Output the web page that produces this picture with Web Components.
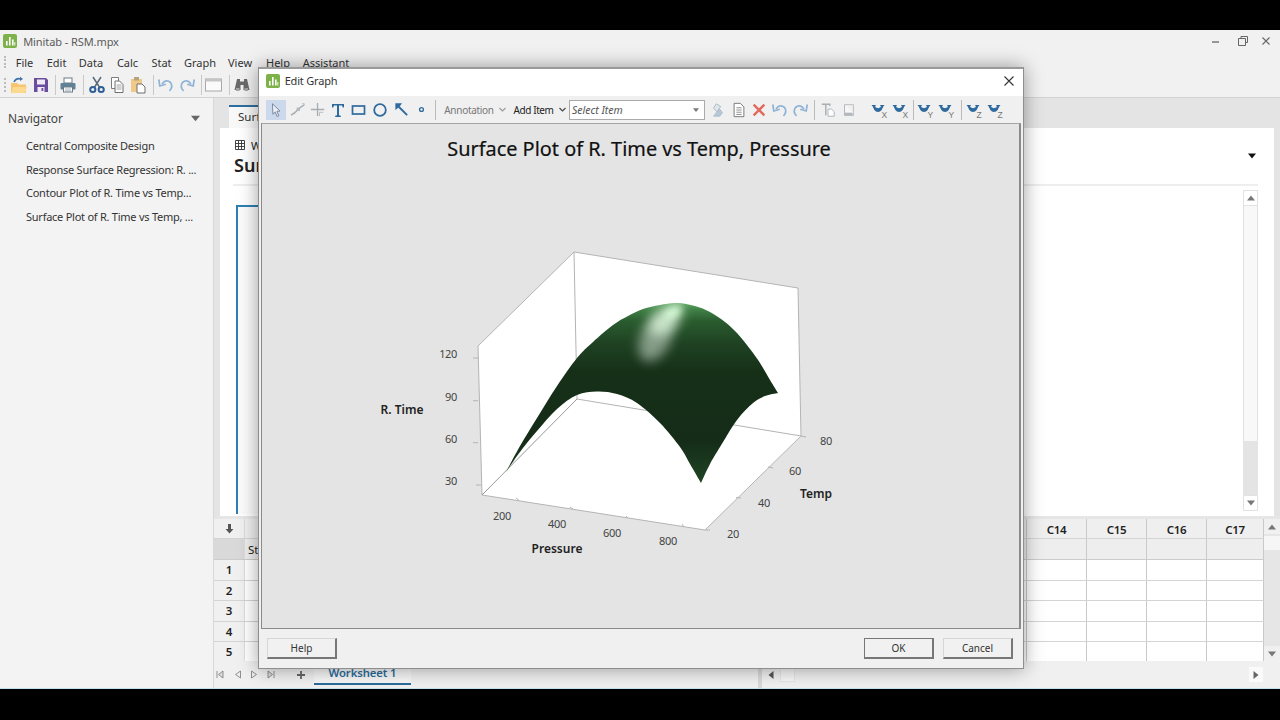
<!DOCTYPE html>
<html lang="en"><head><meta charset="utf-8"><title>Minitab - RSM.mpx</title>
<style>
html,body{margin:0;height:100%;background:#000;overflow:hidden}
body{font-family:"Noto Sans","Open Sans",sans-serif}
</style></head>
<body>
<minitab-app></minitab-app>
<script>
const FONT='"Noto Sans","Open Sans",sans-serif';
const ICONS={
 logo:`<svg viewBox="0 0 14 14" width="14" height="14"><rect width="14" height="14" rx="2" fill="#7db24a"/><rect x="3" y="7" width="1.6" height="4.5" fill="#fff"/><rect x="6" y="3" width="1.6" height="8.5" fill="#fff"/><rect x="9" y="5.5" width="1.6" height="6" fill="#fff"/><rect x="11.2" y="8" width="1.2" height="3.5" fill="#dfeccf"/></svg>`,
 open:`<svg viewBox="0 0 18 18"><path d="M1 7h6l1.500 1.500H16V17H1z" fill="#f5c56f"/><path d="M1 17l2-6h14l-2 6z" fill="#fbd98f"/><path d="M4 6 Q6 1.500 11 3" fill="none" stroke="#3f73a8" stroke-width="1.600"/><path d="M10 .8l3 2.200-3 2z" fill="#3f73a8"/></svg>`,
 save:`<svg viewBox="0 0 18 18"><path d="M2 2h12l2 2v12H2z" fill="#6a4d9c"/><rect x="5" y="3.500" width="8" height="5" fill="#efeaf6"/><rect x="5.500" y="11" width="7" height="5" fill="#efeaf6"/><rect x="9.500" y="12" width="1.800" height="3" fill="#6a4d9c"/></svg>`,
 print:`<svg viewBox="0 0 18 18"><rect x="5" y="2" width="8" height="5" fill="#fff" stroke="#6c7a86"/><rect x="1.500" y="7" width="15" height="6.500" rx="1" fill="#5f8296"/><rect x="4.500" y="11" width="9" height="5" fill="#fff" stroke="#6c7a86"/><path d="M6 13h6M6 14.800h6" stroke="#8a98a4" stroke-width=".7"/></svg>`,
 cut:`<svg viewBox="0 0 18 18"><path d="M5 1l7 11M13 1L6 12" stroke="#5b6a76" stroke-width="1.500" fill="none"/><circle cx="4.800" cy="13.500" r="2.600" fill="none" stroke="#2d5f96" stroke-width="2"/><circle cx="13.200" cy="13.500" r="2.600" fill="none" stroke="#2d5f96" stroke-width="2"/></svg>`,
 copy:`<svg viewBox="0 0 18 18"><path d="M3.500 1.500h7v11h-7z" fill="#fff" stroke="#7c7c7c"/><path d="M7 5h4.500L15 8.500v8H7z" fill="#fff" stroke="#6e6e6e"/><path d="M8.500 9h5M8.500 11h5M8.500 13h5" stroke="#8a8a8a" stroke-width=".8"/></svg>`,
 paste:`<svg viewBox="0 0 18 18"><rect x="2" y="3" width="11" height="13" fill="#eec98a"/><rect x="5" y="1" width="5" height="3.500" fill="#b6a27d"/><path d="M8 8h5l3 3v6H8z" fill="#fff" stroke="#6e6e6e"/></svg>`,
 undo:`<svg viewBox="0 0 18 18"><path d="M5 8 Q9 2.500 13.500 6.500 Q16.500 10.500 12.500 15" fill="none" stroke="#8fb3d6" stroke-width="1.700"/><path d="M1.800 3.500l1 6.500 6-1.800" fill="none" stroke="#8fb3d6" stroke-width="1.700"/></svg>`,
 redo:`<svg viewBox="0 0 18 18"><g transform="matrix(-1 0 0 1 18 0)"><path d="M5 8 Q9 2.500 13.500 6.500 Q16.500 10.500 12.500 15" fill="none" stroke="#8fb3d6" stroke-width="1.700"/><path d="M1.800 3.500l1 6.500 6-1.800" fill="none" stroke="#8fb3d6" stroke-width="1.700"/></g></svg>`,
 window:`<svg viewBox="0 0 18 18"><rect x=".5" y="3" width="16" height="12" fill="#fafafa" stroke="#a8a8a8"/><rect x=".5" y="3" width="16" height="2.500" fill="#c4c4c4"/></svg>`,
 binoc:`<svg viewBox="0 0 18 18"><path d="M4 3h3v2.500h4V3h3l2.500 11h-6V9H7.500v5h-6z" fill="#6a6a6a"/><rect x="3" y="12" width="3.500" height="3" fill="#a5a5a5"/><rect x="11.500" y="12" width="3.500" height="3" fill="#a5a5a5"/></svg>`,
 pointer:`<svg viewBox="0 0 18 18"><path d="M5 2l8.500 8.200-3.500.3 2.200 5-2 .8-2.100-5-2.600 2.500z" fill="#e9eef6" stroke="#6f8296"/></svg>`,
 curve:`<svg viewBox="0 0 18 18"><path d="M1 15 Q5 13 7.500 10 T15 4" fill="none" stroke="#a9aeb4" stroke-width="1.600"/><rect x="7" y="7" width="3.500" height="3.500" fill="#b4b8bc"/><path d="M13 2.500l3 1" stroke="#b4b8bc"/></svg>`,
 cross:`<svg viewBox="0 0 18 18"><path d="M8 2v14M1 9h14" stroke="#a6acb2" stroke-width="1.400"/><path d="M10 12h4M10 12v4" stroke="#b8bcc0"/></svg>`,
 T:`<svg viewBox="0 0 18 18"><path d="M3 3h12v3.500h-1.200L13 4.500H10v9.800l1.800.5V16H6.200v-1.200l1.800-.5V4.500H5l-.8 2H3z" fill="#2e6a9e"/></svg>`,
 rect:`<svg viewBox="0 0 18 18"><rect x="2.500" y="5" width="12" height="8" fill="none" stroke="#2e6a9e" stroke-width="1.700"/></svg>`,
 circle:`<svg viewBox="0 0 18 18"><circle cx="9" cy="9" r="5.800" fill="none" stroke="#2e6a9e" stroke-width="1.800"/></svg>`,
 arrow:`<svg viewBox="0 0 18 18"><path d="M15 15L5 5" stroke="#2e6a9e" stroke-width="2"/><path d="M2.500 2.500h7l-1.500 2-3.500 3.500-2 1.500z" fill="#2e6a9e"/></svg>`,
 dot:`<svg viewBox="0 0 18 18"><circle cx="9" cy="9" r="2.300" fill="none" stroke="#2e6a9e" stroke-width="1.600"/></svg>`,
 layers:`<svg viewBox="0 0 18 18"><path d="M7 2l5 3-4 6-4-4z" fill="#dfe6ec" stroke="#a9b4bd"/><path d="M11 8l3 4-3 4H4l3-4z" fill="#b6c8d8" stroke="#9eb0c0" stroke-width=".7"/></svg>`,
 doc:`<svg viewBox="0 0 18 18"><path d="M3.500 1.500h7l4 4v11h-11z" fill="#fff" stroke="#6c6c6c"/><path d="M6 6.500h6M6 9h6M6 11.500h6M6 14h6" stroke="#777" stroke-width=".9"/></svg>`,
 del:`<svg viewBox="0 0 18 18"><path d="M3 3l12 12M15 3L3 15" stroke="#e2685c" stroke-width="2.600"/></svg>`,
 tcopy:`<svg viewBox="0 0 18 18"><path d="M2 2.500h9v2M6.500 2.500V15" fill="none" stroke="#a8aeb4" stroke-width="1.600"/><path d="M9 8h4l3 3v5H9z" fill="#fff" stroke="#a8aeb4"/></svg>`,
 page:`<svg viewBox="0 0 18 18"><path d="M4 3h10v9" fill="none" stroke="#b4b8bc"/><path d="M4 3v12h10v-3" fill="#f8f8f8" stroke="#a8aeb4"/><rect x="4" y="12" width="9" height="3" fill="#b4b8bc"/></svg>`,
 grid:`<svg viewBox="0 0 10 10" width="10" height="10"><path d="M.5.5h9v9h-9zM3.500.5v9M6.500.5v9M.5 3.500h9M.5 6.500h9" fill="none" stroke="#333" stroke-width=".9"/></svg>`,
};
function rot(l){return `<svg viewBox="0 0 20 20" width="20" height="20"><path d="M3 5.500 Q3.500 12 8 12 Q12.500 12 13 5.500 L10.800 7 Q8 9.300 5.200 7z" fill="#2e6a9e"/><path d="M1.500 5h4.500l-1.800 3.600zM14.500 5H10l1.800 3.600z" fill="#2e6a9e"/><text x="11.500" y="17.500" font-size="8.500" fill="#777" font-family="Liberation Sans,sans-serif">${l}</text></svg>`}
function tri(d,c,s=8){const p={d:'0,0 8,0 4,5',u:'0,5 8,5 4,0',l:'5,0 5,8 0,4',r:'0,0 0,8 5,4'}[d];return `<svg width="${s}" height="${s}" viewBox="0 0 8 8" style="display:block;overflow:visible"><polygon points="${p}" fill="${c}" transform="${d=='d'||d=='u'?'translate(0 1.500)':'translate(1.500 0)'}"/></svg>`}
const chev=c=>`<svg width="7" height="7" viewBox="0 0 7 7" style="display:block"><path d="M.5 2l3 3 3-3" fill="none" stroke="${c}" stroke-width="1.100"/></svg>`;
// row of items placed in flow; each item is [centre x, width, html]
function row(items,origin){let x=origin;return items.map(([c,w,h,st])=>{const ml=c-w/2-x;x=c+w/2;return `<span style="flex:none;display:flex;align-items:center;justify-content:center;margin-left:${ml}px;width:${w}px;height:100%;${st||''}">${h}</span>`}).join('')}
const sep=(c,h=20,col='#c8c8c8')=>[c,1,`<i style="display:block;width:1px;height:${h}px;background:${col}"></i>`];
const ic=(c,n,s=18)=>[c,s,ICONS[n].replace('<svg ',`<svg width="${s}" height="${s}" `)];
function def(name,html){customElements.define(name,class extends HTMLElement{constructor(){super();this.attachShadow({mode:'open'}).innerHTML=typeof html=='function'?html(this):html}})}

def('title-bar',`<style>:host{display:flex;align-items:center;height:22px;background:#f1f1f1;color:#5a5a5a;font:11px ${FONT};letter-spacing:-.08px;flex:none}svg{display:block}</style>
${row([[9.5,14,ICONS.logo],[71,96,'<span style="white-space:nowrap">Minitab - RSM.mpx</span>'],
[1216,10,'<svg width="10" height="10" viewBox="0 0 10 10"><path d="M1 6h7" stroke="#666" stroke-width="1.300"/></svg>'],
[1243,10,'<svg width="10" height="10" viewBox="0 0 10 10"><path d="M3 2.500V.5h6.500v6H7.500M.5 2.500h7v7h-7z" fill="none" stroke="#666"/></svg>'],
[1266,10,'<svg width="10" height="10" viewBox="0 0 10 10"><path d="M1.500 1.500l7 7M8.500 1.500l-7 7" stroke="#666" stroke-width="1.100"/></svg>']],0)}`);

def('menu-bar',`<style>:host{display:flex;align-items:center;height:20px;background:#f1f1f1;color:#333;font:11px ${FONT};flex:none}</style>
${row([[5,2,'<i style="display:block;width:1px;height:12px;border-left:2px dotted #bbb"></i>'],[24.5,17,'File'],[56.5,19,'Edit'],[91,22,'Data'],[127.5,21,'Calc'],[161.5,19,'Stat'],[200,30,'Graph'],[240,24,'View'],[278,24,'Help'],[326,44,'Assistant']],0)}`);

def('main-toolbar',`<style>:host{display:flex;align-items:center;height:26px;background:#f1f1f1;border-bottom:1px solid #d2d2d2;box-sizing:border-box;flex:none}svg{display:block}</style>
${row([[5,2,'<i style="display:block;width:1px;height:14px;border-left:2px dotted #bbb"></i>'],ic(19,'open'),ic(41,'save'),sep(55),ic(68,'print'),sep(83),ic(97,'cut'),ic(117,'copy'),ic(138,'paste'),sep(153),ic(166,'undo'),ic(187,'redo'),sep(201),ic(214,'window'),sep(229),ic(242,'binoc')],0)}`);

def('nav-panel',`<style>:host{display:flex;flex-direction:column;width:214px;flex:none;box-sizing:border-box;background:#f3f3f3;border-right:1px solid #d8d8d8;color:#333;font:11px ${FONT};letter-spacing:-.25px}
.h{display:flex;align-items:center;justify-content:space-between;height:40px;padding:0 13px 0 8px;font-size:12px;letter-spacing:-.1px;color:#444}
ul{list-style:none;margin:0;padding:0 0 0 26px}li{height:23.5px;line-height:16px;white-space:nowrap}</style>
<div class="h"><span>Navigator</span>${tri('d','#666',9)}</div>
<ul><li>Central Composite Design</li><li>Response Surface Regression: R. ...</li><li>Contour Plot of R. Time vs Temp...</li><li>Surface Plot of R. Time vs Temp, ...</li></ul>`);

def('output-pane',`<style>:host{display:flex;flex-direction:column;height:418px;background:#e4e4e4;flex:none;font-family:${FONT};color:#222}
.tabs{height:30px;display:flex;align-items:flex-end;padding-left:15px;flex:none}
.tab{width:60px;height:21px;background:#f8f8f8;border-top:2px solid #2c6f9e;font-size:11.5px;padding-left:9px;line-height:20px;color:#333}
.sheet{flex:1;margin:0 6px;background:#fff;display:flex;flex-direction:column;padding:0 16px 5px 13px;min-height:0}
.head{height:58px;flex:none;border-bottom:2px solid #eee;position:relative;display:flex;flex-direction:column;padding-left:2px;box-sizing:border-box}
.w{display:flex;align-items:center;gap:6px;font-size:11px;height:14px;margin:10px 0 0 0}
.big{font-size:18px;font-weight:600;line-height:24px;margin-top:1px;margin-left:-1px}
.menu{position:absolute;right:2px;top:24px}
.body{flex:1;display:flex;min-height:0;padding-top:4px}
.frame{flex:1;margin:15px 589px -3px 3px;border:solid #2f7fb5;border-width:2px 0 0 2px;background:#fbfbfb}
.sb{width:15px;display:flex;flex-direction:column;box-sizing:border-box}
.btn{height:16px;border:1px solid #e2e2e2;box-sizing:border-box;display:flex;align-items:center;justify-content:center;background:#fff;flex:none}
.t1{height:235px;background:#f8f8f8;border:solid #e2e2e2;border-width:0 1px;flex:none}.t2{flex:1;background:#e4e4e4}</style>
<div class="tabs"><div class="tab">Surf</div></div>
<div class="sheet"><div class="head"><div class="w">${ICONS.grid}<span>W</span></div><div class="big">Sur</div><div class="menu">${tri('d','#111',8)}</div></div>
<div class="body"><div class="frame"></div><div class="sb"><div class="btn">${tri('u','#777')}</div><div class="t1"></div><div class="t2"></div><div class="btn">${tri('d','#777')}</div></div></div></div>`);

def('sheet-grid',()=>{
 const cell=(t,s='')=>`<div class="c ${s}">${t}</div>`;
 let rows='';
 rows+=`<div class="r hd"><div class="rh"><svg width="9" height="10" viewBox="0 0 9 10"><path d="M3 0h3v5h2.500L4.500 9.500.5 5H3z" fill="#555"/></svg></div>${cell('')}${['C14','C15','C16','C17'].map(x=>cell(x)).join('')}</div>`;
 rows+=`<div class="r nm"><div class="rh dk"></div>${cell('<span style="padding-left:3px">St</span>','l')}${cell('').repeat(4)}</div>`;
 [1,2,3,4,5].forEach(n=>rows+=`<div class="r"><div class="rh">${n}</div>${cell('')}${cell('').repeat(4)}</div>`);
 return `<style>:host{display:flex;height:145px;background:#e6e6e6;padding-top:3px;box-sizing:border-box;flex:none;font:11.5px ${FONT};color:#222}
 .g{width:1050px;display:flex;flex-direction:column;flex:none;overflow:hidden}
 .r{display:grid;grid-template-columns:31px 782px 60px 60px 60px 57px;height:20.500px;flex:none;background:#fff;border-bottom:1px solid #d4d4d4;box-sizing:border-box}
 .hd{background:#efefef;height:20px;font-weight:600;letter-spacing:-.3px}.nm{background:#eee;height:21px;border-bottom:1px solid #ccc}
 .hd .c{padding-top:1px}
 .rh{background:#f0f0f0;display:flex;align-items:center;justify-content:center;font-weight:600;border-right:1px solid #ddd}.dk{background:#d9d9d9}
 .c{display:flex;align-items:center;justify-content:center;border-right:1px solid #c9c9c9;box-sizing:border-box;overflow:hidden}.l{justify-content:flex-start}
 .sb{width:16px;display:flex;flex-direction:column;flex:none;background:#e6e6e6}
 .b{height:15px;display:flex;align-items:center;justify-content:center;background:#f0f0f0;flex:none}.th{height:14px;margin-top:2px;background:#f6f6f6;flex:none}.sp{flex:1}</style>
 <div class="g">${rows}</div><div class="sb"><div class="b">${tri('u','#777')}</div><div class="th"></div><div class="sp"></div><div class="b">${tri('d','#777')}</div></div>`});

def('sheet-tabs',`<style>:host{display:flex;align-items:center;height:28px;background:#f0f0f0;flex:1;font:11.3px ${FONT};box-sizing:border-box;min-height:0}svg{display:block}
.tb{color:#2a6c9c;font-weight:600;white-space:nowrap;height:24px;padding-top:1px;display:flex;align-items:center;justify-content:center;border-bottom:2px solid #2a6c9c;box-sizing:border-box;background:#f6f6f6;align-self:flex-start;letter-spacing:-.1px}</style>
${row([
[220,8,'<svg width="8" height="9" viewBox="0 0 8 9"><path d="M1 1v7M7 1L2.500 4.500 7 8z" fill="#ddd" stroke="#777" stroke-width=".8"/></svg>'],
[238,8,'<svg width="8" height="9" viewBox="0 0 8 9"><path d="M6.500 1L1.500 4.500l5 3.500z" fill="#eee" stroke="#777" stroke-width=".8"/></svg>'],
[254,8,'<svg width="8" height="9" viewBox="0 0 8 9"><path d="M1.500 1l5 3.500-5 3.500z" fill="#eee" stroke="#777" stroke-width=".8"/></svg>'],
[271,8,'<svg width="8" height="9" viewBox="0 0 8 9"><path d="M7 1v7M1 1l4.500 3.500L1 8z" fill="#ddd" stroke="#777" stroke-width=".8"/></svg>'],
[301,10,'<svg width="10" height="10" viewBox="0 0 10 10"><path d="M5 1v8M1 5h8" stroke="#666" stroke-width="1.800"/></svg>'],
[362.5,97,'<span class="tb" style="width:97px">Worksheet 1</span>'],
[760,4,'<i style="display:block;width:4px;height:100%;background:#d8d8d8"></i>'],
[771,14,tri('l','#555',8)],
[787,15,'<i style="display:block;width:15px;height:15px;background:#f6f6f6;border:1px solid #e6e6e6;box-sizing:border-box"></i>'],
[1256,14,`<span style="display:flex;width:14px;height:15px;background:#fafafa;align-items:center;justify-content:center">${tri('r','#666',8)}</span>`]
],214)}`);

customElements.define('surface-plot',class extends HTMLElement{constructor(){super();
 const cr=p=>{let d='';for(let i=0;i<p.length-1;i++){const a=p[Math.max(i-1,0)],b=p[i],c=p[i+1],e=p[Math.min(i+2,p.length-1)];d+=(i?'':`M${b} `)+`C${b[0]+(c[0]-a[0])/6} ${b[1]+(c[1]-a[1])/6} ${c[0]-(e[0]-b[0])/6} ${c[1]-(e[1]-b[1])/6} ${c[0]} ${c[1]} `}return d};
 const top=[[506,472],[520,446],[537,418],[557,386],[577,358],[593,342],[613,325],[628,316],[643,309],[660,305],[677,303],[695,306],[710,312],[725,322],[737,333],[750,349],[760,363],[770,380],[778,393]];
 const lower=[[778,393],[765,396],[753,403],[737,420],[720,447],[710,464],[701,483]];
 const lower2=[[701,483],[690,464],[680,447],[660,423],[637,403],[617,394],[597,391.500],[577,395],[557,409],[537,431],[520,452],[506,472]];
 const surf=cr(top)+cr(lower).replace(/^M[^ ]+ /,'')+cr(lower2).replace(/^M[^ ]+ /,'')+'Z';
 const t=(x,y,s,a='middle')=>`<text x="${x}" y="${y}" text-anchor="${a}" class="tk">${s}</text>`;
 const b=(x,y,s)=>`<text x="${x}" y="${y}" text-anchor="middle" class="ax">${s}</text>`;
 const l=(a,b,c,d)=>`<line x1="${a}" y1="${b}" x2="${c}" y2="${d}"/>`;
 this.attachShadow({mode:'open'}).innerHTML=`<style>:host{display:block;flex:1;min-height:0}svg{display:block;width:100%;height:100%}
 .tk{font:11px ${FONT};fill:#444;letter-spacing:-.35px}.ax{font:600 12px ${FONT};fill:#222}.ti{font:19.900px ${FONT};fill:#111;stroke:#111;stroke-width:.2px}</style>
 <svg viewBox="262 124 757 504"><defs>
 <linearGradient id="g" gradientUnits="userSpaceOnUse" x1="0" y1="303" x2="0" y2="483"><stop offset="0" stop-color="#5ca662"/><stop offset=".04" stop-color="#3f7f45"/><stop offset=".1" stop-color="#2a5c2f"/><stop offset=".22" stop-color="#1f4323"/><stop offset=".38" stop-color="#163018"/><stop offset=".76" stop-color="#152c18"/><stop offset="1" stop-color="#1f4424"/></linearGradient>
 <filter id="bl" x="-100%" y="-100%" width="300%" height="300%"><feGaussianBlur stdDeviation="6"/></filter><filter id="bs" x="-100%" y="-100%" width="300%" height="300%"><feGaussianBlur stdDeviation="3.500"/></filter><clipPath id="cp"><path d="${surf}"/></clipPath></defs>
 <text x="639" y="156" text-anchor="middle" class="ti">Surface Plot of R. Time vs Temp, Pressure</text>
 <polygon points="574,252 798,288 801,436 577,399" fill="#fff"/><polygon points="478,346 574,252 577,399 482,495" fill="#fff"/><polygon points="482,495 577,399 801,436 705,530" fill="#fff"/>
 <g stroke="#b4b4b4" stroke-width="1" fill="none">
 <polyline points="478,346 574,252 798,288 801,436 705,530 482,495 478,346"/>${l(574,252,577,399)}${l(577,399,801,436)}<line x1="482" y1="495" x2="577" y2="399" stroke="#999"/>
 ${l(473,358,478,358)}${l(473,400.7,478,400.7)}${l(473,442.700,478,442.700)}${l(476,485,481,485)}
 ${l(516,498,519,500.500)}${l(570,507,573,509)}${l(626,516,628,518)}${l(682,524,684,527)}
 ${l(705,530,710,530)}${l(736,497.500,741,498)}${l(768,467,773,468)}${l(801,436,806,437)}</g>
 <path d="${surf}" fill="url(#g)"/>
 <g clip-path="url(#cp)"><ellipse cx="656" cy="337" rx="15" ry="26" transform="rotate(25 656 337)" fill="#eaf5ea" opacity=".5" filter="url(#bl)"/><ellipse cx="666" cy="320" rx="19" ry="11" transform="rotate(-40 666 320)" fill="#dcf5dc" opacity=".8" filter="url(#bl)"/><ellipse cx="673" cy="312" rx="10" ry="5" transform="rotate(-30 673 312)" fill="#dcffdc" opacity=".85" filter="url(#bs)"/></g>
 ${t(457,358,'120','end')}${t(457,401,'90','end')}${t(457,443,'60','end')}${t(457,485,'30','end')}
 ${t(502,520,'200')}${t(557,528,'400')}${t(612,537,'600')}${t(668,545,'800')}
 ${t(733,538,'20')}${t(764,507,'40')}${t(795,475,'60')}${t(826,445,'80')}
 ${b(402,413.500,'R. Time')}${b(557,553,'Pressure')}${b(816,498,'Temp')}</svg>`}});

def('edit-graph',`<style>:host{position:absolute;left:258px;top:37px;width:766px;height:602px;box-sizing:border-box;background:#f0f0f0;border:1px solid #8e8e8e;border-top:2px solid #9a9a9a;box-shadow:0 0 18px rgba(0,0,0,.38);display:flex;flex-direction:column;font:11px ${FONT};color:#333}
svg{display:block}
.tt{height:27px;padding-bottom:4px;box-sizing:border-box;background:#fff;display:flex;align-items:center;flex:none;letter-spacing:-.2px}
.tb{height:27px;display:flex;align-items:center;flex:none;background:#f0f0f0}
.plot{flex:none;height:506px;margin:0 2px;background:#e4e4e4;border:1px solid #8a8a8a;border-right:2px solid #8a8a8a;border-top-color:#a5a5a5;box-sizing:border-box;display:flex}
.ft{flex:1;display:flex;align-items:center;padding:0 10px 0 8px;gap:9px}
.bt{width:70px;height:21px;box-sizing:border-box;background:#f1f1f1;border:1px solid #d6d6d6;border-right:2px solid #777;border-bottom:2px solid #777;display:flex;align-items:center;justify-content:center;font-size:10px;color:#333}
.ok{border-left:1px solid #777;border-top:1px solid #777}
.sp{flex:1}
.sel{display:flex;align-items:center;justify-content:space-between;width:136px;height:20px;box-sizing:border-box;border:1px solid #aaa;background:#fff;padding:0 5px 0 2px;font-style:italic;font-size:10.500px;color:#555}</style>
<div class="tt">${row([[14,14,ICONS.logo],[52,52,'<span style="white-space:nowrap">Edit Graph</span>'],[750,12,'<svg width="12" height="12" viewBox="0 0 12 12"><path d="M1.500 1.500l9 9M10.500 1.500l-9 9" stroke="#333" stroke-width="1.100"/></svg>']],0)}</div>
<div class="tb">${row([
 [17,20,ICONS.pointer.replace('<svg ','<svg width="16" height="18" '),'background:#ccd8ec;height:20px'],
 ic(39,'curve',17),ic(59,'cross',17),ic(79,'T',18),ic(100,'rect',18),ic(121,'circle',18),ic(142,'arrow',17),ic(162,'dot',15),sep(176,20,'#bbb'),
 [210,48,'<span style="white-space:nowrap;color:#777;font-size:10px;letter-spacing:-.3px">Annotation</span>'],[243,7,chev('#999')],
 [274.5,39,'<span style="white-space:nowrap;font-size:10px;letter-spacing:-.4px;color:#222">Add Item</span>'],[303,7,chev('#444')],
 [378,136,`<span class="sel"><span>Select Item</span>${tri('d','#777',6)}</span>`],
 ic(459,'layers',16),ic(480,'doc',16),ic(500,'del',16),ic(521,'undo',18),ic(541,'redo',18),sep(555,20,'#bbb'),ic(569,'tcopy',16),ic(590,'page',16),
 [621,20,rot('X')],[642,20,rot('X')],sep(654,20,'#bbb'),[667,20,rot('Y')],[688,20,rot('Y')],sep(702,20,'#bbb'),[716,20,rot('Z')],[737,20,rot('Z')]
],0)}</div>
<div class="plot"><surface-plot></surface-plot></div>
<div class="ft"><div class="bt">Help</div><div class="sp"></div><div class="bt ok">OK</div><div class="bt">Cancel</div></div>`);

def('minitab-app',`<style>:host{display:flex;flex-direction:column;position:relative;margin-top:30px;height:659px;box-sizing:border-box;border-bottom:1px solid #bfe0ee;background:#f1f1f1;overflow:hidden}
.main{flex:1;display:flex;min-height:0}.rt{flex:1;display:flex;flex-direction:column;min-width:0}</style>
<title-bar></title-bar><menu-bar></menu-bar><main-toolbar></main-toolbar>
<div class="main"><nav-panel></nav-panel><div class="rt"><output-pane></output-pane><sheet-grid></sheet-grid><sheet-tabs></sheet-tabs></div></div>
<edit-graph></edit-graph>`);
</script>
</body></html>
